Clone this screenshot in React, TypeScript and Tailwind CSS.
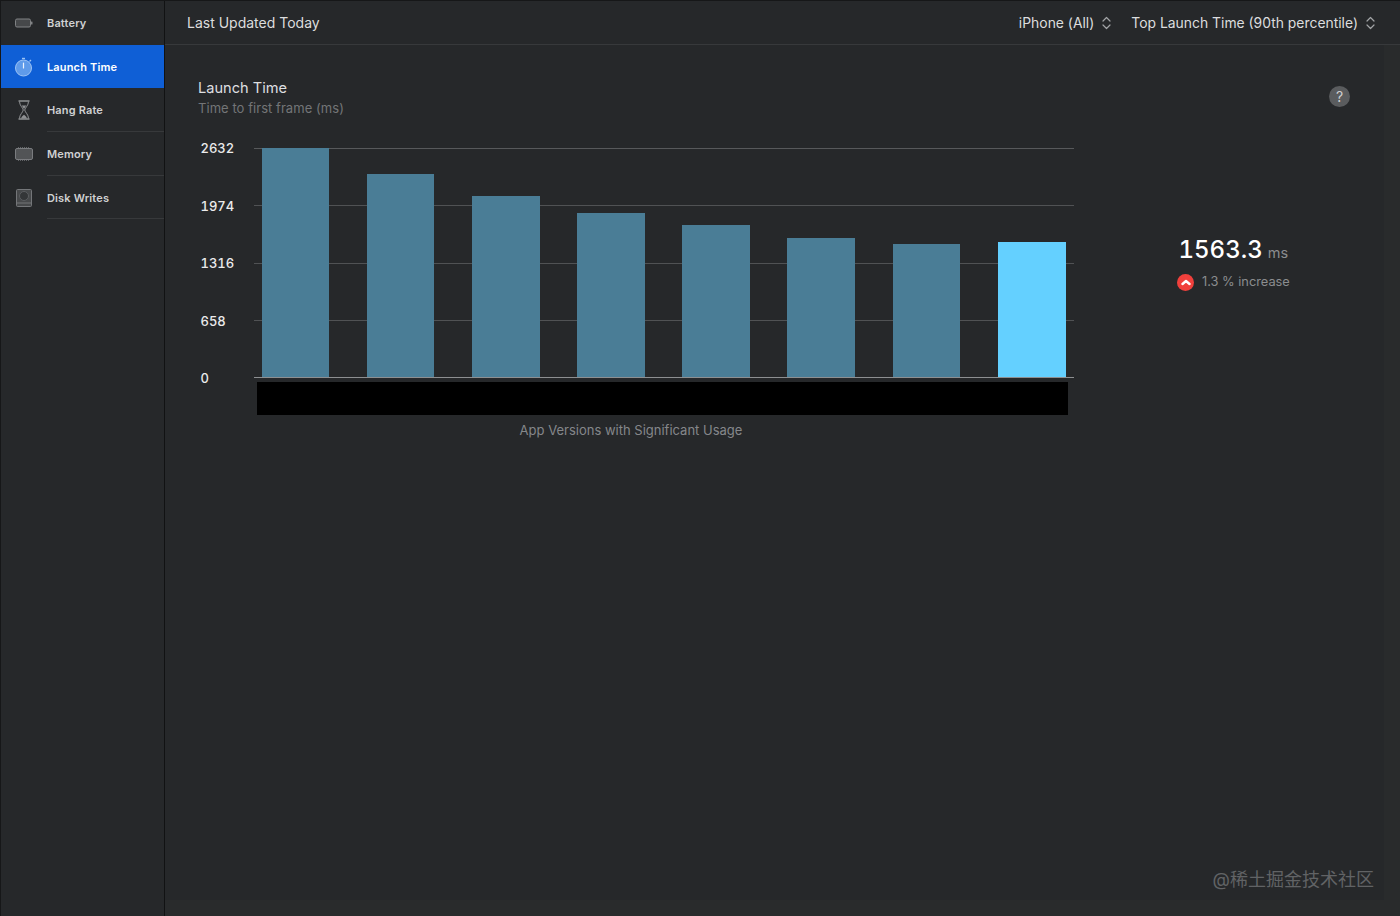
import type { ReactNode } from "react";

const font = "font-['Inter','Liberation_Sans','Noto_Sans_CJK_SC',sans-serif]";

function BatteryIcon() {
  return (
    <svg width="18" height="10" viewBox="0 0 18 10" fill="none">
      <rect x="0.5" y="1" width="15" height="8" rx="1.5" fill="#46484a" stroke="#808284" />
      <rect x="16" y="3.5" width="1.5" height="3" rx="0.5" fill="#808284" />
    </svg>
  );
}

function StopwatchIcon() {
  return (
    <svg width="20" height="20" viewBox="0 0 20 20" fill="none">
      <circle cx="9.5" cy="11" r="8" fill="#5f9bea" stroke="#9cc3f5" />
      <rect x="8" y="0.8" width="3" height="1.4" fill="#9cc3f5" />
      <path d="M15.5 4.500l1.500-1.500" stroke="#9cc3f5" strokeWidth="1.300" />
      <path d="M9.500 6v5" stroke="#eaf2fd" strokeWidth="1.200" strokeLinecap="round" />
    </svg>
  );
}

function HourglassIcon() {
  return (
    <svg width="14" height="20" viewBox="0 0 14 20" fill="none">
      <path d="M1.500 1h11M1.500 19h11" stroke="#8f9193" strokeWidth="1.300" />
      <path d="M2.500 1.500c0 4 3.300 6 3.800 8.500-.5 2.500-3.800 4.500-3.800 8.500M11.500 1.500c0 4-3.300 6-3.800 8.500.5 2.500 3.800 4.500 3.800 8.500" stroke="#8f9193" strokeWidth="1" />
      <path d="M4.800 5.500h4.400L7 9zM4 18.500c.6-1.800 1.700-3 3-3.800 1.300.8 2.400 2 3 3.800z" fill="#8f9193" />
    </svg>
  );
}

function MemoryIcon() {
  return (
    <svg width="18" height="14" viewBox="0 0 18 14" fill="none">
      <rect x="0.500" y="1.500" width="17" height="11" rx="1.500" fill="#525456" stroke="#7a7c7f" />
      <path d="M3 .8h12M3 13.200h12" stroke="#7a7c7f" strokeWidth="1" strokeDasharray="1 1" />
    </svg>
  );
}

function DiskIcon() {
  return (
    <svg width="16" height="18" viewBox="0 0 16 18" fill="none">
      <rect x="0.500" y="0.500" width="15" height="17" rx="1" fill="#47494b" stroke="#747679" />
      <circle cx="8" cy="7" r="4.500" fill="#343638" stroke="#5c5e61" />
      <path d="M1 14h14" stroke="#747679" />
    </svg>
  );
}

function UpDown() {
  return (
    <svg width="9" height="14" viewBox="0 0 9 14" fill="none" stroke="#a2a4a6" strokeWidth="1.200" strokeLinecap="round" strokeLinejoin="round">
      <path d="M1 5l3.500-3.500L8 5M1 9l3.500 3.500L8 9" />
    </svg>
  );
}

type NavItem = { label: string; icon: ReactNode; active?: boolean; divider?: boolean };

const navItems: NavItem[] = [
  { label: "Battery", icon: <BatteryIcon /> },
  { label: "Launch Time", icon: <StopwatchIcon />, active: true },
  { label: "Hang Rate", icon: <HourglassIcon />, divider: true },
  { label: "Memory", icon: <MemoryIcon />, divider: true },
  { label: "Disk Writes", icon: <DiskIcon />, divider: true },
];

function NavRow({ label, icon, active, divider }: NavItem) {
  return (
    <div className={`flex h-[43.700px] items-center ${active ? "bg-[#0f5fd6]" : ""}`}>
      <div className="flex w-[46px] shrink-0 justify-center">{icon}</div>
      <div className={`flex h-full flex-1 items-center border-b pt-[1.500px] ${divider ? "border-[#37393b]" : "border-transparent"}`}>
        <span className={`text-[11px] font-semibold tracking-[0.15px] ${active ? "text-white" : "text-[#d0d1d2]"}`}>{label}</span>
      </div>
    </div>
  );
}

const yLabels = ["2632", "1974", "1316", "658", "0"];
const barHeights = [229, 203, 181, 164, 152, 139, 133, 135];

function Chart() {
  return (
    <div className="flex">
      <div className="flex h-[230px] w-[56px] flex-col justify-between pl-[2.500px]">
        {yLabels.map((label) => (
          <span key={label} className="h-0 text-[13px] leading-[0px] font-medium text-[#ebebec] tabular-nums">
            {label}
          </span>
        ))}
      </div>
      <div className="w-[820px]">
        <div className="relative h-[230px] border-b border-[#8d8f91]">
          <div className="absolute top-0 right-0 left-0 h-px bg-[#57595b]" />
          <div className="absolute top-[57px] right-0 left-0 h-px bg-[#505254]" />
          <div className="absolute top-[115px] right-0 left-0 h-px bg-[#505254]" />
          <div className="absolute top-[172px] right-0 left-0 h-px bg-[#505254]" />
          <div className="relative flex h-full items-end gap-[37.400px] pl-[7.500px]">
            {barHeights.map((h, i) => (
              <div
                key={i}
                className={`w-[67.800px] ${i === 7 ? "bg-[#64d0ff]" : "bg-[#4a7d96]"}`}
                style={{ height: h }}
              />
            ))}
          </div>
        </div>
        <div className="mt-[3.500px] ml-[3px] h-[33px] w-[811px] bg-black" />
        <div className="mt-[6px] pr-[66px] text-center text-[13px] leading-[18px] text-[#85878a]">
          App Versions with Significant Usage
        </div>
      </div>
    </div>
  );
}

export default function App() {
  return (
    <div className={`flex h-[916px] w-[1400px] overflow-hidden border-t border-[#161718] bg-[#292b2c] ${font}`}>
      <aside className="w-[165px] shrink-0 border-r border-l border-r-[#111213] border-l-[#161718] bg-[#26282a]">
        {navItems.map((item) => (
          <NavRow key={item.label} {...item} />
        ))}
      </aside>

      <div className="flex min-w-0 flex-1 flex-col">
        <header className="flex h-[44px] shrink-0 items-center justify-between border-b border-[#37393b] bg-[#26282a] pr-[25px] pl-[22px] text-[14px] text-[#dcddde]">
          <span>Last Updated Today</span>
          <div className="flex items-center pt-[1px] text-[13.900px]">
            <span>iPhone (All)</span>
            <span className="mr-5 ml-2"><UpDown /></span>
            <span>Top Launch Time (90th percentile)</span>
            <span className="ml-2"><UpDown /></span>
          </div>
        </header>

        <div className="flex flex-1 flex-col pr-4 pb-4">
          <main className="relative flex flex-1 bg-[#26282a] pt-[34px] pl-[33px]">
            <div className="flex-1">
              <div className="text-[14.600px] leading-[18px] text-[#dedfe0]">Launch Time</div>
              <div className="mt-[2px] text-[13px] leading-[18px] tracking-[0.05px] text-[#737577]">Time to first frame (ms)</div>
              <div className="mt-[31px]">
                <Chart />
              </div>
            </div>

            <div className="absolute top-[41px] right-[34px] flex h-[21px] w-[21px] items-center justify-center rounded-full bg-[#5a5c5e] text-[14px] text-[#cfd0d1]">
              ?
            </div>

            <div className="absolute top-[189px] left-[1012px]">
              <div className="flex items-baseline pl-[1.500px]">
                <span className="text-[24px] leading-[32px] font-medium text-white tabular-nums">1563.3</span>
                <span className="ml-[5px] text-[14.500px] text-[#8b8d8f]">ms</span>
              </div>
              <div className="mt-[7px] flex items-center gap-2">
                <span className="flex h-[17px] w-[17px] items-center justify-center rounded-full bg-[#f0403c]">
                  <svg width="10" height="7" viewBox="0 0 10 7" fill="none" stroke="#fff" strokeWidth="2.400" strokeLinecap="round" strokeLinejoin="round">
                    <path d="M1.500 5L5 2l3.500 3" />
                  </svg>
                </span>
                <span className="text-[12.800px] leading-[18px] text-[#8b8d8f]">1.3 % increase</span>
              </div>
            </div>

            <div className="absolute right-[10px] bottom-[8px] text-[18px] leading-[24px] text-[#616365]">
              @稀土掘金技术社区
            </div>
          </main>
        </div>
      </div>
    </div>
  );
}
